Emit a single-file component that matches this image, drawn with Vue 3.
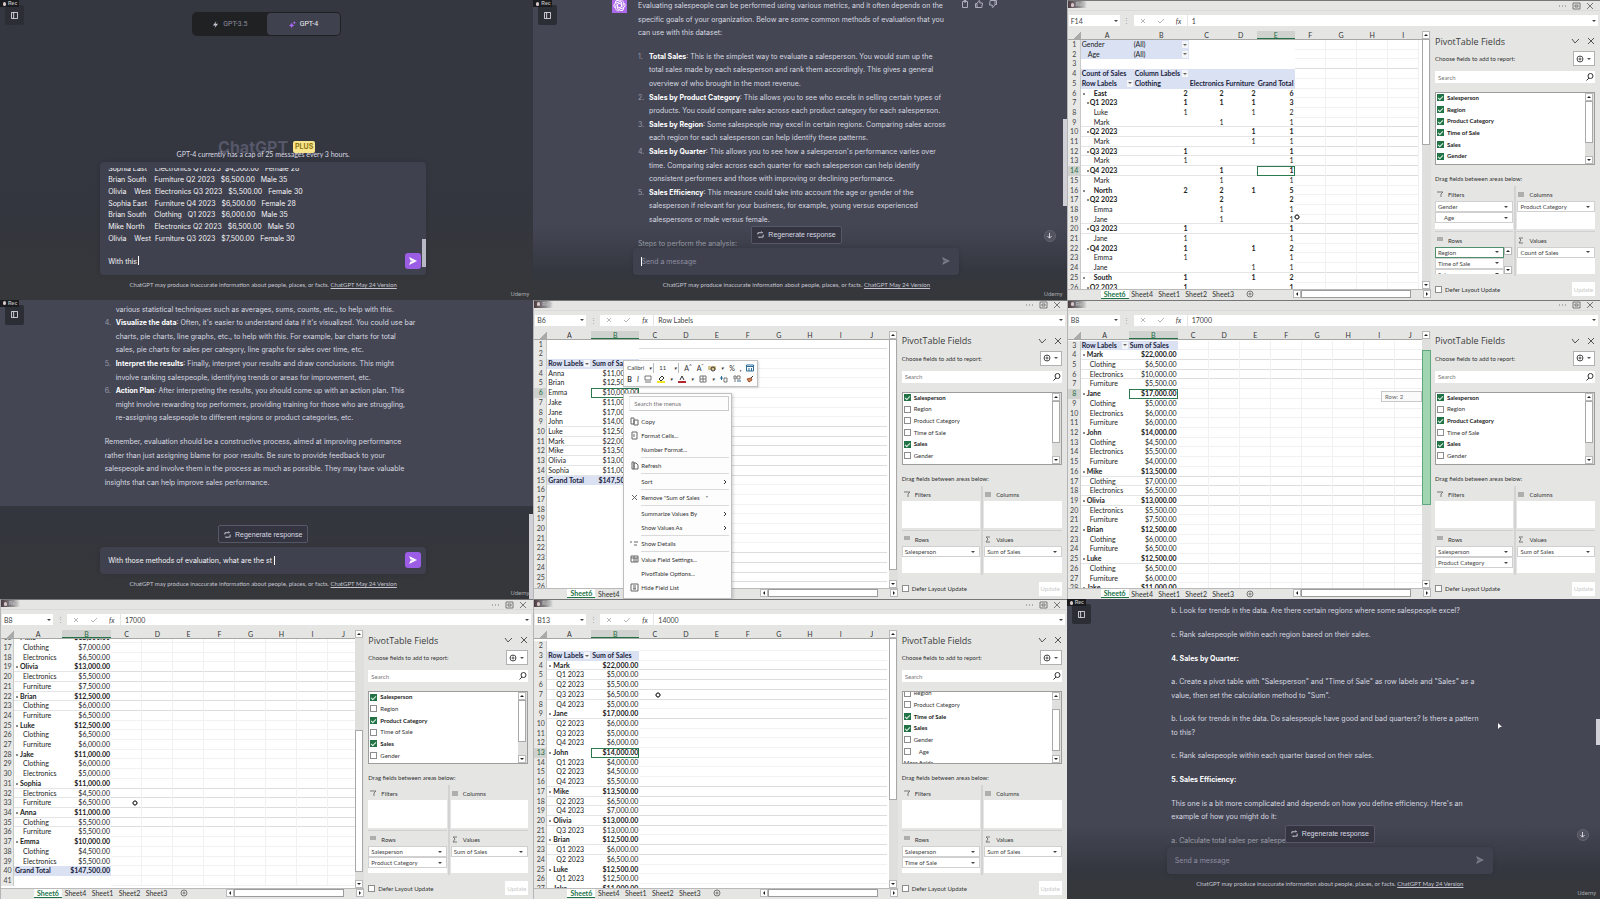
<script setup>
import { ref, onMounted } from 'vue'

const bar = ['Salesperson', 'Region', 'Product Category', 'Time of Sale', 'Sales', 'Gender']
const pick = (...on) => bar.map((name) => ({ name, on: on.includes(name) }))

// Each row: [number, label, value, kind]; kind: g = group, i = item, h = header, t = total
const groups = (start, list) => {
  let n = start
  return list.flatMap(([name, total, items]) => [
    [n++, name, total, 'g'],
    ...items.map(([label, value]) => [n++, label, value, 'i'])
  ])
}
const toRow = ([num, label, value, kind]) => ({ num, kind, cells: [label, value] })

const categorySales = groups(4, [
  ['Mark', '$22,000.00', [['Clothing', '$6,500.00'], ['Electronics', '$10,000.00'], ['Furniture', '$5,500.00']]],
  ['Jane', '$17,000.00', [['Clothing', '$5,000.00'], ['Electronics', '$6,000.00'], ['Furniture', '$6,000.00']]],
  ['John', '$14,000.00', [['Clothing', '$4,500.00'], ['Electronics', '$5,500.00'], ['Furniture', '$4,000.00']]],
  ['Mike', '$13,500.00', [['Clothing', '$7,000.00'], ['Electronics', '$6,500.00']]],
  ['Olivia', '$13,000.00', [['Electronics', '$5,500.00'], ['Furniture', '$7,500.00']]],
  ['Brian', '$12,500.00', [['Clothing', '$6,000.00'], ['Furniture', '$6,500.00']]],
  ['Luke', '$12,500.00', [['Clothing', '$6,500.00'], ['Furniture', '$6,000.00']]],
  ['Jake', '$11,000.00', [['Clothing', '$6,000.00'], ['Electronics', '$5,000.00']]],
  ['Sophia', '$11,000.00', [['Electronics', '$4,500.00'], ['Furniture', '$6,500.00']]],
  ['Anna', '$11,000.00', [['Clothing', '$5,500.00'], ['Furniture', '$5,500.00']]],
  ['Emma', '$10,000.00', [['Clothing', '$4,500.00'], ['Electronics', '$5,500.00']]]
]).map(toRow)

const quarterSales = groups(4, [
  ['Mark', '$22,000.00', [['Q1 2023', '$5,000.00'], ['Q2 2023', '$5,500.00'], ['Q3 2023', '$6,500.00'], ['Q4 2023', '$5,000.00']]],
  ['Jane', '$17,000.00', [['Q2 2023', '$6,000.00'], ['Q3 2023', '$5,000.00'], ['Q4 2023', '$6,000.00']]],
  ['John', '$14,000.00', [['Q1 2023', '$4,000.00'], ['Q2 2023', '$4,500.00'], ['Q4 2023', '$5,500.00']]],
  ['Mike', '$13,500.00', [['Q2 2023', '$6,500.00'], ['Q4 2023', '$7,000.00']]],
  ['Olivia', '$13,000.00', [['Q3 2023', '$13,000.00']]],
  ['Brian', '$12,500.00', [['Q1 2023', '$6,000.00'], ['Q2 2023', '$6,500.00']]],
  ['Luke', '$12,500.00', [['Q1 2023', '$12,500.00']]],
  ['Jake', '$11,000.00', []]
]).map(toRow)

const header = { num: 3, kind: 'h', cells: ['Row Labels', 'Sum of Sales'] }

const people = [
  ['Anna', '$11,000.00'], ['Brian', '$12,500.00'], ['Emma', '$10,000.00'], ['Jake', '$11,000.00'],
  ['Jane', '$17,000.00'], ['John', '$14,000.00'], ['Luke', '$12,500.00'], ['Mark', '$22,000.00'],
  ['Mike', '$13,500.00'], ['Olivia', '$13,000.00'], ['Sophia', '$11,000.00']
].map((cells, i) => ({ num: i + 4, kind: 'p', cells }))
const empty = (from, to) => Array.from({ length: to - from + 1 }, (_, i) => ({ num: from + i, kind: 'e', cells: ['', ''] }))

const countRows = [
  ['f', 'Gender', '(All)'], ['f', 'Age', '(All)'], ['e', '', ''],
  ['h', 'Count of Sales', 'Column Labels', '', '', ''],
  ['h', 'Row Labels', 'Clothing', 'Electronics', 'Furniture', 'Grand Total'],
  ['g', 'East', 2, 2, 2, 6], ['q', 'Q1 2023', 1, 1, 1, 3], ['i', 'Luke', 1, '', 1, 2], ['i', 'Mark', '', 1, '', 1],
  ['q', 'Q2 2023', '', '', 1, 1], ['i', 'Mark', '', '', 1, 1], ['q', 'Q3 2023', 1, '', '', 1], ['i', 'Mark', 1, '', '', 1],
  ['q', 'Q4 2023', '', 1, '', 1], ['i', 'Mark', '', 1, '', 1], ['g', 'North', 2, 2, 1, 5], ['q', 'Q2 2023', '', 2, '', 2],
  ['i', 'Emma', '', 1, '', 1], ['i', 'Jane', '', 1, '', 1], ['q', 'Q3 2023', 1, '', '', 1], ['i', 'Jane', 1, '', '', 1],
  ['q', 'Q4 2023', 1, '', 1, 2], ['i', 'Emma', 1, '', '', 1], ['i', 'Jane', '', '', 1, 1], ['g', 'South', 1, '', 1, 2],
  ['q', 'Q2 2023', 1, '', '', 1]
].map(([kind, ...cells], i) => ({ num: i + 1, kind, cells }))

const panels = [
  {
    type: 'chat', mode: 'new',
    text: 'Sophia East    Electronics Q1 2023  $4,500.00   Female 28\nBrian South    Furniture Q2 2023   $6,500.00   Male 35\nOlivia    West  Electronics Q3 2023   $5,500.00   Female 30\nSophia East    Furniture Q4 2023   $6,500.00   Female 28\nBrian South    Clothing   Q1 2023   $6,000.00   Male 35\nMike North     Electronics Q2 2023   $6,500.00   Male 50\nOlivia    West  Furniture Q3 2023   $7,500.00   Female 30\n\nWith this'
  },
  {
    type: 'chat', mode: 'reply', tools: true, top: -1, down: true, caret: 8, thumb: [119, 87],
    blocks: [
      { p: 'Evaluating salespeople can be performed using various metrics, and it often depends on the\nspecific goals of your organization. Below are some common methods of evaluation that you\ncan use with this dataset:' },
      {
        list: [
          [1, 'Total Sales', ': This is the simplest way to evaluate a salesperson. You would sum up the\ntotal sales made by each salesperson and rank them accordingly. This gives a general\noverview of who brought in the most revenue.'],
          [2, 'Sales by Product Category', ': This allows you to see who excels in selling certain types of\nproducts. You could compare sales across each product category for each salesperson.'],
          [3, 'Sales by Region', ': Some salespeople may excel in certain regions. Comparing sales across\neach region for each salesperson can help identify these patterns.'],
          [4, 'Sales by Quarter', ": This allows you to see how a salesperson's performance varies over\ntime. Comparing sales across each quarter for each salesperson can help identify\nconsistent performers and those with improving or declining performance."],
          [5, 'Sales Efficiency', ': This measure could take into account the age or gender of the\nsalesperson if relevant for your business, for example, young versus experienced\nsalespersons or male versus female.']
        ]
      },
      { p: 'Steps to perform the analysis:' }
    ]
  },
  {
    type: 'sheet', name: 'F14', value: '1', active: 'E', activeRow: 14, shift: 0, lines: [3, 9, 10, 11, 12, 13, 14, 19, 20, 24],
    widths: [53, 55, 36, 32, 38, 31, 31, 31, 31], vertical: true, rows: countRows, thumb: [0, 106],
    fields: bar.map((name) => ({ name, on: true })), scroll: -1, listThumb: [0, 42],
    areas: { Filters: ['Gender', 'Age'], Columns: ['Product Category'], Rows: ['Region', 'Time of Sale', 'Salesperson'], Values: ['Count of Sales'] }
  },
  {
    type: 'chat', mode: 'draft', top: 3, text: 'With those methods of evaluation, what are the st', caret: 174, thumb: [214, 85],
    blocks: [
      {
        list: [
          ['', '', 'various statistical techniques such as averages, sums, counts, etc., to help with this.'],
          [4, 'Visualize the data', ": Often, it's easier to understand data if it's visualized. You could use bar\ncharts, pie charts, line graphs, etc., to help with this. For example, bar charts for total\nsales, pie charts for sales per category, line graphs for sales over time, etc."],
          [5, 'Interpret the results', ': Finally, interpret your results and draw conclusions. This might\ninvolve ranking salespeople, identifying trends or areas for improvement, etc.'],
          [6, 'Action Plan', ': After interpreting the results, you should come up with an action plan. This\nmight involve rewarding top performers, providing training for those who are struggling,\nre-assigning salespeople to different regions or product categories, etc.']
        ]
      },
      { p: 'Remember, evaluation should be a constructive process, aimed at improving performance\nrather than just assigning blame for poor results. Be sure to provide feedback to your\nsalespeople and involve them in the process as much as possible. They may have valuable\ninsights that can help improve sales performance.' }
    ]
  },
  {
    type: 'sheet', name: 'B6', value: 'Row Labels', active: 'B', activeRow: 6, shift: 0, lines: [1, 9, 10, 11, 12, 13, 14, 22, 23, 24, 25],
    widths: [44, 48, 31, 31, 31, 31, 31, 31, 31, 31], menu: true, thumb: [0, 231],
    rows: [...empty(1, 2), header, ...people, { num: 15, kind: 't', cells: ['Grand Total', '$147,500.00'] }, ...empty(16, 26)],
    fields: pick('Salesperson', 'Sales'), scroll: -1, listThumb: [0, 42],
    areas: { Filters: [], Columns: [], Rows: ['Salesperson'], Values: ['Sum of Sales'] }
  },
  {
    type: 'sheet', name: 'B8', value: '17000', active: 'B', activeRow: 8, shift: 1, lines: [4, 5, 6, 16, 17, 18, 19, 25],
    widths: [48, 49, 31, 31, 31, 31, 31, 31, 31, 31], vertical: true, rows: [header, ...categorySales.slice(0, 25)], thumb: [11, 155], hot: true,
    fields: pick('Salesperson', 'Product Category', 'Sales'), scroll: -1, listThumb: [0, 42],
    areas: { Filters: [], Columns: [], Rows: ['Salesperson', 'Product Category'], Values: ['Sum of Sales'] }
  },
  {
    type: 'sheet', name: 'B8', value: '17000', active: 'B', activeRow: 0, shift: -6, lines: [19, 20, 21, 22, 23, 31, 32, 33, 34, 35],
    widths: [48, 49, 31, 31, 31, 31, 31, 31, 31, 31], vertical: true, thumb: [92, 142],
    rows: [...categorySales.slice(12), { num: 40, kind: 't', cells: ['Grand Total', '$147,500.00'] }, ...empty(41, 41)],
    fields: pick('Salesperson', 'Product Category', 'Sales'), scroll: -1, listThumb: [0, 42],
    areas: { Filters: [], Columns: [], Rows: ['Salesperson', 'Product Category'], Values: ['Sum of Sales'] }
  },
  {
    type: 'sheet', name: 'B13', value: '14000', active: 'B', activeRow: 13, shift: 2, lines: [4, 5, 6, 7, 9, 16, 17, 18, 19, 20, 22, 23],
    widths: [44, 48, 31, 31, 31, 31, 31, 31, 31, 31], thumb: [0, 162],
    rows: [...empty(2, 2), header, ...quarterSales],
    fields: [...pick('Time of Sale', 'Sales').slice(1), { name: 'Age', on: false, inset: true }, { name: 'More fields', note: true }], scroll: -5, listThumb: [9, 42],
    areas: { Filters: [], Columns: [], Rows: ['Salesperson', 'Time of Sale'], Values: ['Sum of Sales'] }
  },
  {
    type: 'chat', mode: 'reply', top: 5, down: true, thumb: [120, 26], pointer: true,
    blocks: [
      { p: 'b. Look for trends in the data. Are there certain regions where some salespeople excel?' },
      { p: 'c. Rank salespeople within each region based on their sales.' },
      { b: '4. Sales by Quarter:' },
      { p: 'a. Create a pivot table with "Salesperson" and "Time of Sale" as row labels and "Sales" as a\nvalue, then set the calculation method to "Sum".' },
      { p: 'b. Look for trends in the data. Do salespeople have good and bad quarters? Is there a pattern\nto this?' },
      { p: 'c. Rank salespeople within each quarter based on their sales.' },
      { b: '5. Sales Efficiency:' },
      { p: "This one is a bit more complicated and depends on how you define efficiency. Here's an\nexample of how you might do it:" },
      { p: 'a. Calculate total sales per salesperson' }
    ]
  }
]

const menu = [
  { label: 'Copy', icon: 'copy' }, { label: 'Format Cells...', icon: 'cells' }, { label: 'Number Format...' }, null,
  { label: 'Refresh', icon: 'page' }, null, { label: 'Sort', more: true }, null,
  { label: 'Remove "Sum of Sales    "', icon: 'x' }, null,
  { label: 'Summarize Values By', more: true }, { label: 'Show Values As', more: true }, null,
  { label: 'Show Details', icon: 'detail' }, null, { label: 'Value Field Settings...', icon: 'field' },
  { label: 'PivotTable Options...' }, { label: 'Hide Field List', icon: 'list' }
]
const glyph = {
  copy: 'M1 1h3v6H1zM4 3h4v5H4z', cells: 'M2 1h5v7H2zM4 3v3', page: 'M2 1h2v7H2zM4 2h2l2 2v4H4z', x: 'M2 2l5 5M7 2l-5 5',
  detail: 'M0 3h2M4 3h4M4 6h3', field: 'M1 1h7v6H1zM1 3h7M4 1v6M6 3v4', list: 'M1 1h7v7H1zM3 3h3M3 5h3M3 6h3'
}
const areaIcon = { Filters: 'M0 1h6L4 3v3', Columns: 'M1 1v5M3 1v5M5 1v5', Rows: 'M0 1h6M0 3h6', Values: 'M5 1H1l2 2-2 3h4' }
const letters = 'ABCDEFGHIJ'

const drafts = ref([])
onMounted(() => drafts.value.forEach((el) => { el.scrollTop = 5 }))
</script>

<template>
  <main class="wall">
    <section v-for="(p, k) in panels" :key="k" class="panel" :class="p.type">
      <template v-if="p.type === 'chat'">
        <button class="side" aria-label="Toggle sidebar">
          <svg viewBox="0 0 8 8"><path d="M.5.5h7v7h-7zM3 .5v7" /></svg>
        </button>
        <span class="rec"><i></i>Rec</span>

        <template v-if="p.mode === 'new'">
          <div class="models">
            <button><svg class="bolt" viewBox="0 0 8 8"><path d="M5 0L1 5h3L3 8l4-5H4z" /></svg>GPT-3.5</button>
            <button class="on"><svg class="spark" viewBox="0 0 8 8"><path d="M3 2l1 2 2 1-2 1-1 2-1-2-2-1 2-1zM6 0l.6 1.4L8 2l-1.400.6L6 4l-.6-1.400L4 2l1.400-.6z" /></svg>GPT-4</button>
          </div>
          <h1 class="brand">ChatGPT <span>PLUS</span></h1>
        </template>

        <article v-else class="message" :class="{ full: p.mode === 'reply' }" :style="{ paddingTop: Math.max(p.top, 0) + 'px' }">
          <div class="column" :style="{ marginTop: Math.min(p.top, 0) + 'px' }">
            <svg v-if="p.tools" class="avatar" viewBox="0 0 16 16">
              <rect width="16" height="16" />
              <g v-for="a in 6" :key="a" :transform="`rotate(${a * 60} 8 8)`"><path d="M8 3c2-1.500 4 0 4 2v3L8 10.500" /></g>
            </svg>
            <div v-if="p.tools" class="tools">
              <button aria-label="Copy"><svg viewBox="0 0 8 8"><path d="M2 1.500h4.500v6H1.500V1.500zM3 .5h2v1.500H3z" /></svg></button>
              <button aria-label="Good response"><svg viewBox="0 0 8 8"><path d="M.5 3.500h1.500v4H.5zM2 3.500L4 .5c1 0 1 1 .7 2.500h2.800l-.7 4.500H2" /></svg></button>
              <button aria-label="Bad response"><svg viewBox="0 0 8 8"><path d="M7.500 4.500H6v-4h1.500zM6 4.500l-2 3c-1 0-1-1-.7-2.500H.5L1.200.5H6" /></svg></button>
            </div>
            <template v-for="(b, j) in p.blocks" :key="j">
              <p v-if="b.p">{{ b.p }}</p>
              <h3 v-else-if="b.b">{{ b.b }}</h3>
              <ol v-else>
                <li v-for="li in b.list" :key="li[2]"><span class="num">{{ li[0] ? li[0] + '.' : '' }}</span><div><b>{{ li[1] }}</b>{{ li[2] }}</div></li>
              </ol>
            </template>
          </div>
        </article>

        <div class="dock" :class="{ fade: p.mode === 'reply' }">
          <p v-if="p.mode === 'new'" class="cap">GPT-4 currently has a cap of 25 messages every 3 hours.</p>
          <button v-else class="regen"><svg viewBox="0 0 8 8"><path d="M1 4V2h5M5 .5L6.500 2M7 4v3H2M3 8L1.500 6.500" /></svg>Regenerate response</button>
          <form class="composer" :class="{ tall: p.mode === 'new' }" @submit.prevent>
            <textarea v-if="p.mode === 'new'" ref="drafts" aria-label="Message" :value="p.text"></textarea>
            <input v-else aria-label="Message" placeholder="Send a message" :value="p.text">
            <span v-if="p.caret" class="caret" :style="{ left: p.caret + 'px' }"></span>
            <span v-if="p.mode === 'new'" class="caret low"></span>
            <span v-if="p.mode === 'new'" class="box-thumb"></span>
            <button class="send" :class="{ ready: p.text }" aria-label="Send"><svg viewBox="0 0 8 8"><path d="M0 0l8 4-8 4 1.500-3.500L5 4 1.500 3.500z" /></svg></button>
          </form>
          <p class="legal">ChatGPT may produce inaccurate information about people, places, or facts. <a href="#">ChatGPT May 24 Version</a></p>
        </div>
        <button v-if="p.down" class="down" aria-label="Scroll to bottom"><svg viewBox="0 0 8 8"><path d="M4 1v6M1.500 4.500L4 7l2.500-2.500" /></svg></button>
        <span v-if="p.thumb" class="page-thumb" :style="{ top: p.thumb[0] + 'px', height: p.thumb[1] + 'px' }"></span>
        <svg v-if="p.pointer" class="pointer" viewBox="0 0 4 6"><path d="M0 0l4 4H2L0 6z" /></svg>
        <span class="mark">Udemy</span>
      </template>

      <template v-else>
        <header class="title">
          <span class="rec light"><i></i>Rec</span>
          <svg viewBox="0 0 40 8"><path d="M2 4h1M5 4h1M8 4h1M16 1h7v6h-7zM18 3h3v2h-3zM30 1l6 6M36 1l-6 6" /></svg>
        </header>
        <div class="formula">
          <label class="namebox"><input aria-label="Name box" :value="p.name"><svg viewBox="0 0 4 4"><path d="M0 1h4L2 3z" /></svg></label>
          <span class="dots">⋮</span>
          <div class="fx"><svg viewBox="0 0 30 8"><path d="M1 2l4 4M5 2L1 6M18 4l2 2 4-4" /></svg><i>fx</i></div>
          <label class="value"><input aria-label="Formula" :value="p.value"><svg viewBox="0 0 4 4"><path d="M0 1h4L2 3z" /></svg></label>
        </div>
        <div class="work">
          <div class="book">
            <div class="grid-row">
              <div class="grid">
                <div class="heads">
                  <span class="corner"></span>
                  <span v-for="(w, c) in p.widths" :key="c" :class="{ sel: letters[c] === p.active }" :style="{ width: w + 'px' }">{{ letters[c] }}</span>
                </div>
                <div class="clip">
                  <table :style="{ marginTop: p.shift + 'px' }">
                    <colgroup><col class="numcol"><col v-for="(w, c) in p.widths" :key="c" :style="{ width: w + 'px' }"></colgroup>
                    <tbody>
                      <tr v-for="r in p.rows" :key="r.num" :class="['k-' + r.kind, { line: p.lines.includes(r.num), vert: p.vertical }]">
                        <th scope="row" :class="{ sel: r.num === p.activeRow }">{{ r.num }}</th>
                        <td
                          v-for="(w, c) in p.widths" :key="c"
                          :class="{ first: c === 0, data: c < r.cells.length, wide: r.cells.length > 2, free: c >= (k === 2 ? 5 : 2), cur: r.num === p.activeRow && letters[c] === p.active }"
                        >
                          <span v-if="c === 0 && (r.kind === 'g' || r.kind === 'q')" class="fold"></span>{{ r.cells[c] }}<span v-if="(r.kind === 'h' && c === 0 && r.cells[0] === 'Row Labels') || (k === 2 && c === 1 && (r.kind === 'f' || r.num === 4))" class="drop"><svg viewBox="0 0 4 4"><path d="M0 1h4L2 3z" /></svg></span>
                        </td>
                      </tr>
                    </tbody>
                  </table>
                  <span v-if="p.hot" class="tip">Row: 2</span>
                </div>
              </div>
              <div class="vbar">
                <b class="arrow"><svg viewBox="0 0 4 4"><path d="M0 3h4L2 1z" /></svg></b>
                <div class="track"><span :class="{ hot: p.hot }" :style="{ top: p.thumb[0] + 'px', height: p.thumb[1] + 'px' }"></span></div>
                <b class="arrow"><svg viewBox="0 0 4 4"><path d="M0 1h4L2 3z" /></svg></b>
              </div>
            </div>
            <nav class="tabs">
              <button v-for="s in ['Sheet6', 'Sheet4', 'Sheet1', 'Sheet2', 'Sheet3']" :key="s" :class="{ on: s === 'Sheet6' }">{{ s }}</button>
              <button class="plus" aria-label="New sheet"><svg viewBox="0 0 8 8"><circle cx="4" cy="4" r="3" /><path d="M4 2.500v3M2.500 4h3" /></svg></button>
              <div class="hbar">
                <b class="arrow"><svg viewBox="0 0 4 4"><path d="M3 0v4L1 2z" /></svg></b><span></span><b class="arrow"><svg viewBox="0 0 4 4"><path d="M1 0v4l2-2z" /></svg></b>
              </div>
            </nav>
          </div>

          <aside class="pane">
            <h2>PivotTable Fields <svg viewBox="0 0 24 8"><path d="M1 2l3 4 4-4M17 1l6 6M23 1l-6 6" /></svg></h2>
            <div class="choose"><span>Choose fields to add to report:</span>
              <button aria-label="Tools"><svg viewBox="0 0 18 8"><circle cx="5" cy="4" r="3" /><path d="M5 1v1M5 6v1M2 4h1M7 4h1" /><circle cx="5" cy="4" r="1" /><path class="solid" d="M12 3h4l-2 2z" /></svg></button>
            </div>
            <label class="search"><input aria-label="Search fields" placeholder="Search"><svg viewBox="0 0 8 8"><circle cx="4.500" cy="3" r="2.500" /><path d="M3 5L.5 7.500" /></svg></label>
            <div class="fields">
              <div class="items">
                <div class="inner" :style="{ marginTop: p.scroll + 'px' }">
                  <label v-for="f in p.fields" :key="f.name" :class="{ on: f.on, inset: f.inset }"><input v-if="!f.note" type="checkbox" :checked="f.on"><span>{{ f.name }}</span></label>
                </div>
              </div>
              <div class="vbar">
                <b class="arrow"><svg viewBox="0 0 4 4"><path d="M0 3h4L2 1z" /></svg></b>
                <div class="track"><span :style="{ top: p.listThumb[0] + 'px', height: p.listThumb[1] + 'px' }"></span></div>
                <b class="arrow"><svg viewBox="0 0 4 4"><path d="M0 1h4L2 3z" /></svg></b>
              </div>
            </div>
            <p class="drag">Drag fields between areas below:</p>
            <div class="areas">
              <section v-for="(list, name) in p.areas" :key="name">
                <h4><svg viewBox="0 0 7 7"><path :d="areaIcon[name]" /></svg>{{ name }}</h4>
                <div class="well">
                  <div class="chips">
                    <button v-for="(f, n) in list" :key="f" :class="{ first: list.length > 2 && n === 0, sub: f === 'Age' }">{{ f }}<svg viewBox="0 0 4 4"><path d="M0 1h4L2 3z" /></svg></button>
                  </div>
                  <div v-if="list.length > 2" class="vbar"><b class="arrow"><svg viewBox="0 0 4 4"><path d="M0 3h4L2 1z" /></svg></b><div class="track"></div><b class="arrow"><svg viewBox="0 0 4 4"><path d="M0 1h4L2 3z" /></svg></b></div>
                </div>
              </section>
            </div>
            <div class="defer"><label><input type="checkbox"> Defer Layout Update</label><button disabled>Update</button></div>
          </aside>
        </div>

        <template v-if="p.menu">
          <div class="mini">
            <div>
              <label class="pickone f"><select aria-label="Font"><option>Calibri</option></select><i>▾</i></label>
              <label class="pickone s"><select aria-label="Font size"><option>11</option></select><i>▾</i></label>
              <button>A<sup>^</sup></button><button>A<sup>ˇ</sup></button>
              <button><svg viewBox="0 0 8 8"><path class="tan" d="M0 2h8v4H0z" /><circle cx="5" cy="5" r="2" /></svg></button><i>▾</i>
              <button>%</button><button><b>,</b></button>
              <button><svg viewBox="0 0 8 8"><path class="teal" d="M.5 1h7v6h-7zM.5 2.500h7M3 4v3M5.500 4v3" /></svg></button>
            </div>
            <div>
              <button><b>B</b></button><button><i>I</i></button><button><svg class="pale" viewBox="0 0 8 8"><path d="M1 1h6v4H1zM1 7h6" /></svg></button>
              <button><svg viewBox="0 0 8 8"><path d="M2 4l3-3 2 2-3 3z" /><path class="yellow" d="M0 6h8v2H0z" /></svg></button><i>▾</i>
              <button><svg viewBox="0 0 8 8"><path d="M2 5l2-4 2 4" /><path class="red" d="M0 6h8v2H0z" /></svg></button><i>▾</i>
              <button><svg class="pale" viewBox="0 0 8 8"><path d="M1 1h6v6H1zM4 1v6M1 4h6" /></svg></button><i>▾</i>
              <button><svg class="pale" viewBox="0 0 8 8"><path class="teal" d="M0 3h3M1.500 1v4" /><path d="M4 3h3v4H4z" /></svg></button>
              <button><svg class="pale" viewBox="0 0 8 8"><path class="teal" d="M4 6h4" /><path d="M1 1h2v3H1zM4 1h3v3H4zM1 6h2" /></svg></button>
              <button><svg viewBox="0 0 8 8"><path class="brush" d="M1 4l2 3 3-2-1-2z" /><path d="M5 3l2-2" /></svg></button>
            </div>
          </div>
          <div class="menu">
            <input aria-label="Search the menus" placeholder="Search the menus">
            <template v-for="(m, j) in menu" :key="j">
              <hr v-if="!m">
              <button v-else><span class="ic"><svg v-if="m.icon" viewBox="0 0 9 9"><path :d="glyph[m.icon]" /></svg></span>{{ m.label }}<svg v-if="m.more" class="more" viewBox="0 0 4 6"><path d="M1 1l2 2-2 2" /></svg></button>
            </template>
          </div>
        </template>
        <svg v-if="k === 2 || k === 6 || k === 7" class="cross" :class="'at-' + k" viewBox="0 0 6 6"><path d="M2 1h2v1h1v2H4v1H2V4H1V2h1z" /></svg>
      </template>
    </section>
  </main>
</template>

<style>
html, body { background: #343541; }
</style>

<style scoped>
.wall { display: grid; grid-template-columns: repeat(3, minmax(0, 1fr)); grid-template-rows: repeat(3, minmax(0, 1fr)); height: 100vh; }
.wall, .wall * { box-sizing: border-box; }
.panel { position: relative; overflow: hidden; min-width: 0; }
button, input, select, textarea { font: inherit; color: inherit; border: 0; padding: 0; margin: 0; background: none; outline: 0; min-width: 0; }
svg { display: block; fill: none; stroke: currentColor; stroke-width: 1; }
p, h1, h2, h3, h4, ol { margin: 0; padding: 0; font-weight: 400; }

/* Chat */
.chat { font-family: Inter, "Liberation Sans", sans-serif; font-size: 7px; color: #d8dae0; background: linear-gradient(#343640 60%, #35373a); }
.side { position: absolute; z-index: 3; left: 5px; top: 5px; width: 19px; height: 20px; background: #2c2e36; border-radius: 2px; display: grid; place-items: center; }
.side svg { width: 7px; height: 7px; color: #e4e4e8; }
.rec { position: absolute; z-index: 4; left: 0; top: 0; width: 19px; height: 7px; background: #1a1b1e; color: #b8b8b8; font: 700 5px/7px "Liberation Sans", sans-serif; display: flex; align-items: center; gap: 2px; padding-left: 3px; }
.rec i { width: 3px; height: 4px; border-radius: 2px; background: #d9c8c8; }
.rec.light { background: linear-gradient(90deg, #4a3a40, #8e8c8e 60%, #e4e5e3); }
.models { display: flex; width: 149px; height: 24px; margin: 12px auto 0; background: #202123; border-radius: 5px; padding: 1px; font-family: Roboto, sans-serif; }
.models button { flex: 1; display: flex; gap: 4px; align-items: center; justify-content: center; color: #8e8ea0; border-radius: 4px; }
.models .on { background: #40414f; color: #ececf1; }
.models svg { width: 7px; height: 7px; stroke: none; fill: #c5c5d2; }
.models .spark { fill: #ab68ff; }
.brand { display: flex; justify-content: center; align-items: center; gap: 5px; margin-top: 101px; font-size: 16px; line-height: 20px; font-weight: 700; color: #565869; }
.brand span { font-size: 7px; line-height: 12px; background: #f9e68c; color: #8f7412; padding: 0 2px; border-radius: 2px; }
.message { background: #444654; }
.message.full { min-height: 100%; }
.message:not(.full) { padding-bottom: 17px; }
.column { position: relative; width: 334px; margin: 0 auto; padding-left: 5px; line-height: 1.943; white-space: pre; }
.column > * + :not(svg):not(.tools) { margin-top: 10px; }
.avatar + .tools + p { margin-top: 0 !important; }
.column h3 { font-size: 7px; font-weight: 700; color: #fff; }
.column li { display: grid; grid-template-columns: 11px 1fr; white-space: pre; }
.column ol { list-style: none; }
.num { color: #9a9ca8; }
.column b { color: #fff; }
.avatar { position: absolute; left: -21px; top: -1px; width: 15px; height: 15px; color: #fff; }
.avatar rect { fill: #ab68e8; stroke: none; }
.tools { position: absolute; left: 328px; top: 1px; display: flex; gap: 6px; color: #acacbe; }
.tools svg { width: 8px; height: 8px; }
.dock { position: absolute; left: 0; right: 0; bottom: 0; height: 75px; padding-right: 7px; display: flex; flex-direction: column; align-items: center; justify-content: flex-end; }
.dock.fade { background: linear-gradient(rgba(52, 54, 64, 0), #353740 60%, #35373a); }
.cap { line-height: 12px; margin-bottom: 2px; color: #d9d9e3; font-family: Lato, sans-serif; }
.regen { display: flex; align-items: center; gap: 4px; height: 18px; padding: 0 5px; margin-bottom: 4px; border: 1px solid #565869; border-radius: 2px; background: #343541; color: #d9d9e3; font-family: "Liberation Sans", sans-serif; }
.regen svg { width: 7px; height: 7px; }
.composer { position: relative; width: 326px; height: 27px; background: #40414f; border-radius: 4px; box-shadow: 0 0 5px rgba(0, 0, 0, .12); padding: 0 24px 0 8px; display: flex; color: #f4f4f6; flex: none; }
.composer.tall { height: 113px; padding: 6px 2px 8px 8px; }
.composer input { flex: 1; }
.composer input::placeholder { color: #8e8ea0; opacity: 1; }
.composer textarea { flex: 1; resize: none; overflow: hidden; line-height: 1.667; white-space: pre; }
.caret { position: absolute; top: 9px; width: 1px; height: 9px; background: #fff; }
.caret.low { top: 94px; left: 38px; }
.box-thumb { position: absolute; right: 0; bottom: 8px; width: 4px; height: 28px; background: #b7b8c4; }
.send { position: absolute; right: 5px; bottom: 6px; width: 16px; height: 16px; border-radius: 3px; display: grid; place-items: center; color: #7b7c8a; }
.send.ready { background: #9b5de5; color: #fff; }
.send svg { width: 8px; height: 8px; fill: currentColor; stroke: none; }
.legal { font: 6px/10px Lato, sans-serif; margin: 5px 0 10px; color: #c5c5d2; }
.legal a { color: inherit; }
.down { position: absolute; right: 11px; bottom: 58px; width: 12px; height: 12px; border-radius: 50%; background: #50525f; border: 1px solid #62646f; color: #e4e4ea; display: grid; place-items: center; }
.down svg { width: 7px; height: 7px; }
.page-thumb { position: absolute; right: 0; width: 4px; background: #d0d0d6; }
.pointer { position: absolute; left: 431px; top: 124px; width: 4px; height: 6px; fill: #fff; stroke: none; }
.mark { position: absolute; right: 4px; bottom: 3px; font: 6px/7px Roboto, sans-serif; color: #a4a6aa; }

/* Spreadsheet */
.sheet { display: flex; flex-direction: column; background: #e5e6e4; color: #333; font: 7px Lato, sans-serif; border-top: 1px solid #77777a; border-left: 1px solid #b5b5b8; }
.title { position: relative; height: 10px; border-bottom: 1px solid #dadbd9; display: flex; justify-content: flex-end; align-items: center; padding-right: 3px; flex: none; }
.title svg { width: 40px; height: 8px; color: #777; }
.formula { display: flex; height: 11px; margin: 4px 2px 0 1px; flex: none; color: #444; }
.namebox, .fx, .value { background: #fff; display: flex; align-items: center; padding: 0 2px; }
.namebox { width: 51px; }
.namebox input, .value input { flex: 1; }
.formula label svg, .drop svg, .arrow svg, .chips svg { width: 4px; height: 4px; fill: currentColor; stroke: none; flex: none; }
.dots { width: 14px; text-align: center; line-height: 10px; color: #999; }
.fx { width: 53px; margin-right: 1px; padding-left: 6px; gap: 6px; }
.fx svg { width: 30px; height: 8px; color: #b5b5b5; }
.value { flex: 1; padding-left: 4px; }
.work { flex: 1; display: flex; min-height: 0; padding-top: 5px; }
.book { flex: 1; min-width: 0; display: flex; flex-direction: column; }
.grid-row { flex: 1; min-height: 0; display: flex; }
.grid { flex: 1; min-width: 0; display: flex; flex-direction: column; overflow: hidden; }
.heads { display: flex; height: 9px; border-bottom: 1px solid #a5a8a5; flex: none; line-height: 8px; text-align: center; }
.heads span { flex: none; }
.heads .corner { width: 13px; background: linear-gradient(135deg, transparent 62%, #aaa 62%); }
.heads .sel, th.sel { background: #cfd2cf; color: #1e6b41; }
.heads .sel { box-shadow: inset 0 -1px #217346; }
.clip { position: relative; flex: 1; min-height: 0; overflow: hidden; background: #fff; }
table { table-layout: fixed; border-collapse: separate; border-spacing: 0; width: 0; line-height: 1.387; white-space: nowrap; }
.numcol { width: 13px; }
th, td { padding: 0; }
th { font-weight: 400; text-align: center; background: #e8e9e7; color: #444; box-shadow: inset -1px 0 #c8cac8; }
th::before, td::before { content: "\200b"; }
td { position: relative; text-align: right; padding-right: 1px; color: #222; }
.first { text-align: left; padding-left: 1px; }
.free { box-shadow: inset 0 -1px #f2f2f2; }
.vert .free { box-shadow: inset -1px -1px #f0f1f0; }
.line .free { box-shadow: inset 0 -1px #dcdddc; }
.line.vert .free { box-shadow: inset -1px 0 #f0f1f0, inset 0 -1px #dcdddc; }
.k-h .data, .k-t .data { background: #d9e1f2; font-weight: 700; color: #1b2340; }
.k-f .data { background: #d9e1f2; text-align: left; }
.k-h .data { text-align: left; padding-left: 1px; }
.k-g td, .k-q td { font-weight: 700; }
.k-i .first { padding-left: 9px; }
.k-i .wide.first { padding-left: 13px; }
.k-f:nth-child(2) .first { padding-left: 7px; }
.k-g .first { padding-left: 6px; }
.k-g .wide.first { padding-left: 13px; }
.k-q .first { padding-left: 9px; }
.line:not(.k-e) .data { box-shadow: inset 0 -1px #e4e5e6; }
.fold { position: absolute; left: 2px; top: 4px; width: 2px; height: 2px; background: #8a8a8a; }
.k-q .fold { left: 6px; }
.cur { outline: 1px solid #2a7a4e; outline-offset: -1px; }
.drop { position: absolute; right: 1px; top: 1px; width: 6px; height: 7px; background: #f4f5f7; display: grid; place-items: center; color: #666; }
.tip { position: absolute; right: 0; top: 51px; width: 41px; height: 11px; line-height: 10px; font-size: 6px; padding-left: 3px; background: #fafafa; border: 1px solid #c8c8c8; color: #666; }
.vbar { width: 9px; display: flex; flex-direction: column; flex: none; background: #dfe0de; }
.arrow { width: 8px; height: 8px; background: #fff; border: 1px solid #b8b9b8; display: grid; place-items: center; flex: none; color: #222; }
.track { position: relative; flex: 1; min-height: 0; }
.track span { position: absolute; left: 0; width: 8px; background: #fff; border: 1px solid #a8a9a8; }
.track .hot { width: 9px; background: #9fd5b0; border-color: #5fa57d; }
.tabs { display: flex; height: 11px; align-items: flex-start; padding-left: 33px; flex: none; border-top: 1px solid #b9bab9; line-height: 8px; }
.tabs button { width: 27px; height: 9px; flex: none; }
.tabs .on { color: #217346; font-weight: 700; background: #fff; border-bottom: 1px solid #217346; width: 28px; }
.tabs .plus svg { width: 8px; height: 8px; margin: 0 auto; color: #777; }
.hbar { margin-left: auto; width: 138px; display: flex; }
.hbar span { flex: 1; background: #fff; border: 1px solid #9a9b9a; margin-right: 12px; }
.pane { width: 169px; flex: none; padding: 0 5px 1px 4px; display: flex; flex-direction: column; font-size: 6px; }
.pane h2 { display: flex; align-items: center; justify-content: space-between; height: 20px; font: 9px "Open Sans", sans-serif; color: #3c3c3c; }
.pane h2 svg { width: 24px; height: 8px; color: #555; }
.choose { display: flex; justify-content: space-between; align-items: center; height: 15px; }
.choose button { width: 22px; height: 15px; background: #fff; border: 1px solid #b0b1b0; display: grid; place-items: center; }
.choose svg { width: 18px; height: 8px; color: #555; }
.solid { fill: currentColor; stroke: none; }
.search { display: flex; align-items: center; height: 12px; margin-top: 5px; background: #fff; padding: 0 1px 0 3px; flex: none; }
.search input { flex: 1; }
.search svg { width: 8px; height: 8px; }
.fields { display: flex; height: 73px; margin-top: 9px; flex: none; background: #fff; border: 1px solid #9c9d9c; }
.items { flex: 1; overflow: hidden; }
.inner label { display: flex; align-items: center; gap: 3px; padding-left: 1px; line-height: 1.944; }
.inner label.inset span { padding-left: 5px; }
.inner .on { font-weight: 700; color: #222; }
input[type=checkbox] { appearance: none; width: 7px; height: 7px; border: 1px solid #8c8d8c; background: #fff; flex: none; display: grid; place-items: center; }
input[type=checkbox]:checked { background: #217346; border-color: #217346; }
input[type=checkbox]:checked::after { content: ""; width: 4px; height: 2px; border: solid #dff0e6; border-width: 0 0 1px 1px; transform: rotate(-45deg); }
.drag { line-height: 10px; margin: 9px 0 2px; }
.areas { display: grid; grid-template-columns: 1fr 1fr; grid-template-rows: 1fr 1fr; column-gap: 3px; flex: 1; min-height: 0; }
.areas section { display: flex; flex-direction: column; min-width: 0; min-height: 0; }
.areas section:nth-child(even) { box-shadow: -2px 0 #d2d3d2; }
.areas section:nth-child(n+3) { border-top: 1px solid #cfd0cf; }
.areas h4 { display: flex; align-items: center; gap: 4px; height: 15px; flex: none; padding: 2px 0 0 2px; }
.areas h4 svg { width: 7px; height: 7px; color: #777; }
.well { flex: 1; display: flex; background: #fff; margin-bottom: 2px; min-height: 0; overflow: hidden; }
.areas section:nth-child(even) .well { margin-left: 1px; }
.chips { flex: 1; display: flex; flex-direction: column; min-width: 0; }
.chips button { display: flex; justify-content: space-between; align-items: center; height: 11px; flex: none; padding: 0 4px 0 2px; border: 1px solid #cfd0cf; text-align: left; color: #444; }
.chips .first { border-color: #4f8f6c; }
.chips .sub { padding-left: 8px; }
.defer { display: flex; justify-content: space-between; align-items: center; height: 23px; flex: none; padding-top: 4px; }
.defer label { display: flex; gap: 3px; align-items: center; }
.defer button { width: 23px; height: 14px; background: #fff; color: #c8c9c8; font-size: 6px; }
.mini { position: absolute; left: 89px; top: 59px; width: 135px; height: 27px; background: #fdfdfd; border: 1px solid #bfc0bf; box-shadow: 1px 1px 2px rgba(0, 0, 0, .15); padding: 2px 3px; display: flex; flex-direction: column; justify-content: space-between; }
.mini > div { display: flex; align-items: center; justify-content: space-between; height: 10px; }
.mini svg { width: 8px; height: 8px; }
.mini > div > i, .pickone i { font-size: 5px; }
.pale { color: #777; }
.pickone { display: flex; align-items: center; border-right: 1px solid #bbb; height: 10px; padding-right: 1px; }
.pickone select { appearance: none; flex: 1; font-size: 6px; height: 9px; }
.pickone.f { width: 27px; }
.pickone.s { width: 20px; }
.mini sup { font-size: 5px; line-height: 0; }
.tan { fill: #d8c48a; stroke: none; }
.teal { stroke: #2d6f9a; }
.yellow { fill: #f2e52a; stroke: none; }
.red { fill: #b3262b; stroke: none; }
.brush { fill: #d08a5a; stroke: #a4502b; }
.menu { position: absolute; left: 89px; top: 92px; width: 109px; background: #fdfdfd; border: 1px solid #bfc0bf; box-shadow: 1px 1px 3px rgba(0, 0, 0, .2); padding: 2px 2px 3px; display: flex; flex-direction: column; font-size: 6px; }
.menu input { height: 15px; margin: 0 0 4px 3px; padding-left: 4px; border: 1px solid #c9cac9; border-left-color: #eee; }
.menu button { display: flex; align-items: center; height: 14px; text-align: left; flex: none; white-space: pre; }
.menu .ic { width: 15px; padding-left: 4px; flex: none; }
.ic svg { width: 9px; height: 9px; color: #666; }
.menu hr { margin: 0 0 1px 15px; border: 0; border-top: 1px solid #d9dad9; height: 1px; flex: none; width: auto; }
.more { width: 4px; height: 6px; margin-left: auto; margin-right: 2px; }
.cross { position: absolute; width: 6px; height: 6px; fill: #fff; stroke: #222; }
.at-2 { left: 226px; top: 213px; }
.at-6 { left: 131px; top: 200px; }
.at-7 { left: 121px; top: 92px; }
</style>
